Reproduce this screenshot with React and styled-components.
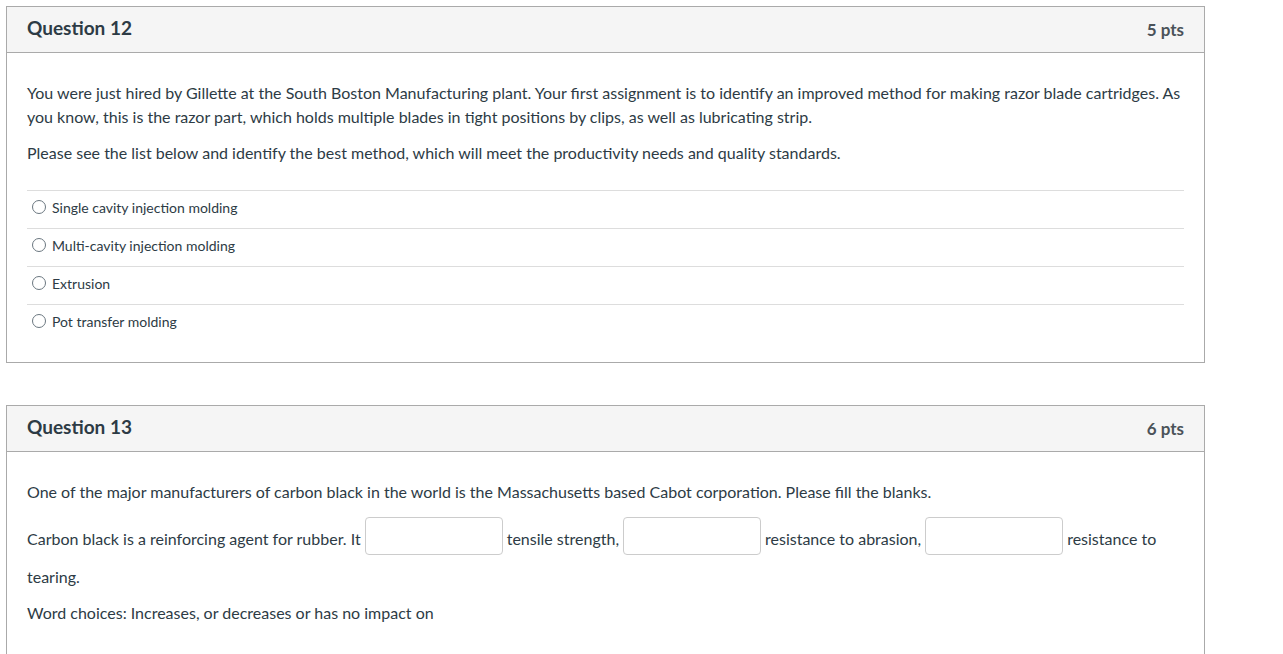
import React from "react";
import styled, { createGlobalStyle } from "styled-components";

const Global = createGlobalStyle`
  html, body { margin: 0; padding: 0; background: #fff; }
  body { font-family: Lato, "Noto Sans", "Liberation Sans", sans-serif; color: #2d3b45; }
`;

const Page = styled.div`
  padding: 6px 0 0 6px;
  width: 1199px;
  display: flex;
  flex-direction: column;
  gap: 42px;
`;

const Card = styled.section`
  border: 1px solid #aaaaaa;
  background: #fff;
`;

const Header = styled.header`
  display: flex;
  justify-content: space-between;
  align-items: center;
  height: 45px;
  padding: 0 20px;
  background: #f5f5f5;
  border-bottom: 1px solid #aaaaaa;
`;

const Title = styled.h2`
  margin: 0 0 4px;
  font-size: 19px;
  font-weight: 700;
  color: #2d3b45;
`;

const Points = styled.span`
  font-size: 17px;
  font-weight: 700;
  color: #4a5259;
`;

const Body = styled.div`
  padding: 28px 20px ${(p) => p.$bottom || "32px"};
`;

const Para = styled.p`
  margin: 0 0 12px;
  font-size: 16px;
  line-height: 24px;
`;

const Answers = styled.div`
  margin-top: 25px;
`;

const Answer = styled.label`
  display: flex;
  align-items: center;
  gap: 6px;
  box-sizing: border-box;
  height: 38px;
  padding: 0 0 5px 5px;
  border-top: 1px solid #dddddd;
  font-size: 14px;
  color: #2d3b45;
`;

const Radio = styled.span`
  width: 12px;
  height: 12px;
  border: 1px solid #6b7780;
  border-radius: 50%;
  flex: none;
`;

const FillLine = styled.p`
  margin: 0 0 12px;
  font-size: 16px;
  line-height: 24px;
`;

const Blank = styled.input`
  display: inline-block;
  box-sizing: border-box;
  width: 138px;
  height: 38px;
  margin: 1px 4px 10px;
  padding: 0 8px;
  border: 1px solid #cccccc;
  border-radius: 4px;
  background: #fff;
  vertical-align: middle;
  font: inherit;
`;

const options = [
  "Single cavity injection molding",
  "Multi-cavity injection molding",
  "Extrusion",
  "Pot transfer molding",
];

export default function App() {
  return (
    <>
      <Global />
      <Page>
        <Card>
          <Header>
            <Title>Question 12</Title>
            <Points>5 pts</Points>
          </Header>
          <Body $bottom="20px">
            <Para>
              You were just hired by Gillette at the South Boston Manufacturing plant. Your first assignment is to identify an improved method for making razor blade cartridges. As you know, this is the razor part, which holds multiple blades in tight positions by clips, as well as lubricating strip.
            </Para>
            <Para>
              Please see the list below and identify the best method, which will meet the productivity needs and quality standards.
            </Para>
            <Answers>
              {options.map((o) => (
                <Answer key={o}>
                  <Radio />
                  {o}
                </Answer>
              ))}
            </Answers>
          </Body>
        </Card>
        <Card>
          <Header>
            <Title>Question 13</Title>
            <Points>6 pts</Points>
          </Header>
          <Body $bottom="60px">
            <Para>
              One of the major manufacturers of carbon black in the world is the Massachusetts based Cabot corporation. Please fill the blanks.
            </Para>
            <FillLine>
              Carbon black is a reinforcing agent for rubber. It
              <Blank aria-label="blank 1" />
              tensile strength,
              <Blank aria-label="blank 2" />
              resistance to abrasion,
              <Blank aria-label="blank 3" />
              resistance to tearing.
            </FillLine>
            <Para>Word choices: Increases, or decreases or has no impact on</Para>
          </Body>
        </Card>
      </Page>
    </>
  );
}
